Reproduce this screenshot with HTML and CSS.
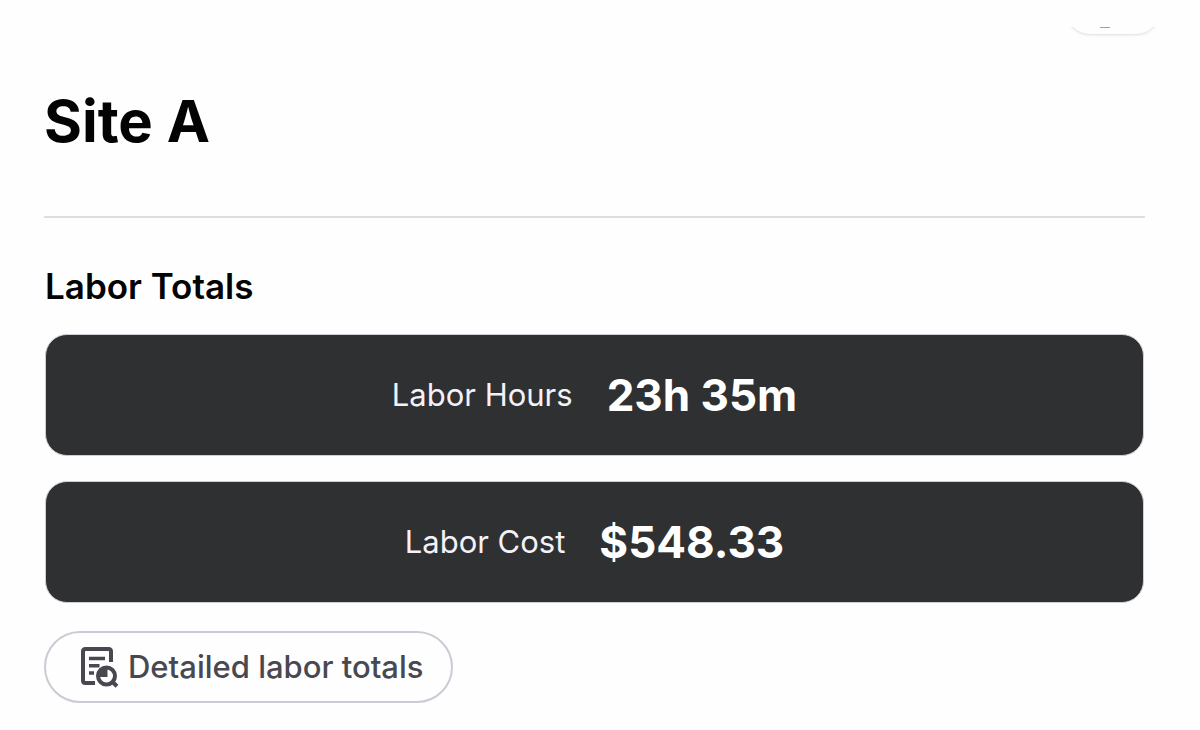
FILE: index.html
```html
<!DOCTYPE html>
<html lang="en">
<head>
<meta charset="utf-8">
<meta name="viewport" content="width=device-width, initial-scale=1">
<title>Site A</title>
<link rel="stylesheet" href="styles.css">
</head>
<body>
<div class="toolbar">
  <button class="toolbar-button" type="button" aria-label="More"><span class="toolbar-mark"></span></button>
</div>
<main class="page">
  <h1 class="title">Site A</h1>
  <section class="totals">
    <h2 class="heading">Labor Totals</h2>
    <dl class="cards">
      <div class="card"><dt class="label">Labor Hours</dt><dd class="value">23h 35m</dd></div>
      <div class="card"><dt class="label">Labor Cost</dt><dd class="value">$548.33</dd></div>
    </dl>
    <button class="details" type="button">
      <svg class="icon" viewBox="0 0 40 42" aria-hidden="true">
        <path d="M31 16V5.500Q31 3 28.500 3H5.500Q3 3 3 5.500V34.500Q3 37 5.500 37H15" fill="none" stroke="currentColor" stroke-width="4"/>
        <path d="M9 12.500H25M9 19.800H19.500M9 27H14" fill="none" stroke="currentColor" stroke-width="3.600"/>
        <circle cx="26.500" cy="30" r="8.500" fill="none" stroke="currentColor" stroke-width="4"/>
        <path d="M27.500 31H18A9 9 0 0 1 27.500 21.500Z" fill="currentColor"/>
        <path d="M32 35.500L37 40.300" stroke="currentColor" stroke-width="4"/>
      </svg>
      <span>Detailed labor totals</span>
    </button>
  </section>
</main>
</body>
</html>
```
FILE: styles.css
```css
* {
  box-sizing: border-box;
}

body {
  margin: 0;
  background: #fefefe;
  color: #030303;
  font-family: Inter, "Liberation Sans", sans-serif;
}

.toolbar {
  display: flex;
  justify-content: flex-end;
  align-items: flex-end;
  height: 12px;
  margin-top: 27px;
  padding: 0 40px 5px;
  overflow: hidden;
}

.toolbar-button {
  display: flex;
  flex: none;
  justify-content: center;
  align-items: flex-end;
  width: 94px;
  height: 48px;
  padding: 0 16px 6px 0;
  border: 0;
  border-radius: 24px;
  background: #fefefe;
  box-shadow: 0 1px 3px #0002;
}

.toolbar-mark {
  width: 10px;
  height: 1px;
  border-radius: 1px;
  background: #9c9ba8;
}

.page {
  padding: 46px 55px 28px 44px;
}

.title {
  margin: 0;
  padding-bottom: 59px;
  border-bottom: 2px solid #dddde3;
  font-size: 58px;
  line-height: 72px;
  font-weight: 700;
}

.totals {
  padding-top: 45px;
}

.heading {
  margin: 0 1px 25px;
  font-size: 35px;
  line-height: 46px;
  font-weight: 600;
}

.cards {
  display: grid;
  gap: 25px;
  margin: 0 1px 28px;
}

.card {
  display: flex;
  justify-content: center;
  align-items: center;
  gap: 34px;
  padding: 30px;
  border: 1px solid #cfced6;
  border-radius: 22px;
  background: #2f3032;
}

.label {
  color: #f4f2f8;
  font-size: 31px;
  line-height: 40px;
}

.value {
  margin: 0;
  color: #fff;
  font-size: 44px;
  line-height: 60px;
  font-weight: 700;
}

.details {
  display: flex;
  align-items: center;
  gap: 8px;
  padding: 13px 28px 13px 34px;
  border: 2px solid #cbcad5;
  border-radius: 36px;
  background: #fefefe;
  color: #484850;
  font-family: inherit;
  font-size: 31px;
  line-height: 42px;
  font-weight: 500;
}

.icon {
  width: 40px;
  height: 42px;
}
```
